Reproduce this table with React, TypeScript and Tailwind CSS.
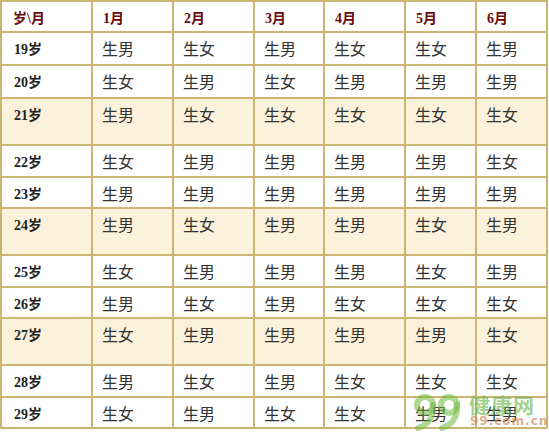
import React from "react";

const months = ["1月", "2月", "3月", "4月", "5月", "6月"];

const rows: { age: string; v: string; tall?: boolean }[] = [
  { age: "19岁", v: "男女男女女男" },
  { age: "20岁", v: "女男女男男男" },
  { age: "21岁", v: "男女女女女女", tall: true },
  { age: "22岁", v: "女男男男男女" },
  { age: "23岁", v: "男男男男男男" },
  { age: "24岁", v: "男女男男女男", tall: true },
  { age: "25岁", v: "女男男男女男" },
  { age: "26岁", v: "男女男女女女" },
  { age: "27岁", v: "女男男男男女", tall: true },
  { age: "28岁", v: "男女男女女女" },
  { age: "29岁", v: "女男女女男男" },
];

const labelFont = {
  fontFamily: '"Liberation Serif", "Noto Sans CJK SC", serif',
};

export default function App() {
  return (
    <div className="relative w-[549px] h-[433px] bg-white overflow-hidden">
      <div className="grid w-[548px] grid-cols-[89px_79px_79px_68px_79px_69px_69px] grid-rows-[29px_31px_31px_45px_30px_29px_45px_30px_29px_45px_30px_29px] gap-[2px] p-[2px] bg-[#cbb570]">
        <div
          className="bg-white pl-[11px] pt-[8px] text-[14px] leading-[18px] font-bold text-[#6a0a0a] whitespace-nowrap"
          style={labelFont}
        >
          岁\月
        </div>
        {months.map((m) => (
          <div
            key={m}
            className="bg-white pl-[10px] pt-[8px] text-[14px] leading-[18px] font-bold text-[#6a0a0a]"
            style={labelFont}
          >
            {m}
          </div>
        ))}
        {rows.map((r) => (
          <React.Fragment key={r.age}>
            <div
              className={`${r.tall ? "bg-[#fcf1da]" : "bg-white"} pl-[12px] pt-[8px] text-[14px] leading-[18px] font-bold text-[#222]`}
              style={labelFont}
            >
              {r.age}
            </div>
            {r.v.split("").map((c, i) => (
              <div
                key={i}
                className={`${r.tall ? "bg-[#fcf1da]" : "bg-white"} pl-[9px] pt-[5px] text-[16px] leading-[20px] text-[#333] font-['Noto_Sans_CJK_SC',sans-serif]`}
              >
                生{c}
              </div>
            ))}
          </React.Fragment>
        ))}
      </div>

      {/* watermark overlay */}
      <div className="absolute right-0 bottom-0 w-[141px] h-[42px] flex items-start gap-[1px] pl-[2px] pt-[2px] pointer-events-none">
        <svg width="58" height="38" viewBox="0 0 58 38" className="shrink-0">
          <g fill="none" stroke="rgba(110,185,60,0.55)" strokeWidth="6" strokeLinecap="round">
            <circle cx="15" cy="12" r="8" />
            <path d="M23 12 C24 24 18 32 8 35" />
            <circle cx="39" cy="12" r="8" />
            <path d="M47 12 C48 24 42 32 32 35" />
          </g>
        </svg>
        <div className="flex flex-col items-start">
          <div className="text-[21px] leading-[22px] font-bold text-[rgba(100,180,70,0.6)] tracking-[1px] font-['Noto_Sans_CJK_SC',sans-serif]">
            健康网
          </div>
          <div className="pl-[1px] text-[12px] leading-[12px] font-bold text-[rgba(205,140,90,0.7)] tracking-[1px] font-['DejaVu_Sans',sans-serif]">
            99.com.cn
          </div>
        </div>
      </div>
    </div>
  );
}
